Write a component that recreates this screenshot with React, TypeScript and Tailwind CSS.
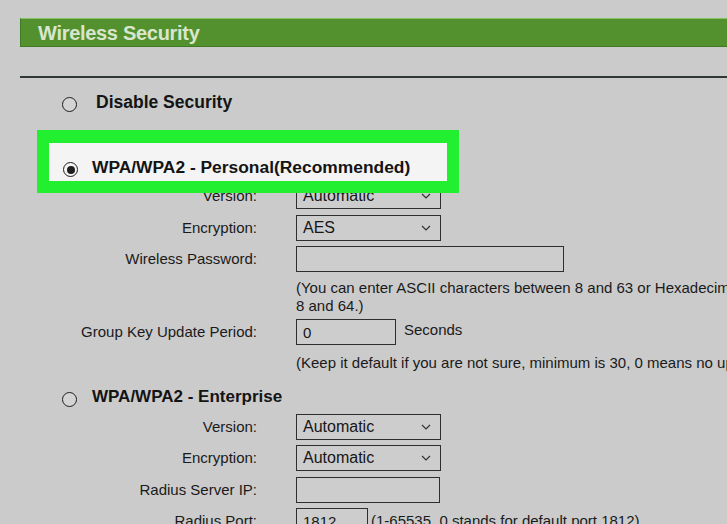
import React from 'react';

const font = { fontFamily: '"Liberation Sans", Arial, sans-serif' };

function Radio({ checked = false }: { checked?: boolean }) {
    return (
        <span className={`flex h-[15px] w-[15px] shrink-0 items-center justify-center rounded-full border-[1.5px] border-[#1e1e1e] ${checked ? 'bg-[#f4f4f4]' : 'bg-[#d4d4d4]'}`}>
            {checked && <span className="h-[8px] w-[8px] rounded-full bg-[#1e1e1e]" />}
        </span>
    );
}

function Select({ value }: { value: string }) {
    return (
        <div className="flex h-[26px] w-[145px] items-center justify-between border border-[#2e2e2e] bg-[#cdcdcd] pl-[6px] pr-[9px] text-[16px] text-[#161616]">
            <span>{value}</span>
            <svg width="10" height="6" viewBox="0 0 10 6" fill="none">
                <polyline points="1,1 5,5 9,1" stroke="#333" strokeWidth="1.2" />
            </svg>
        </div>
    );
}

function Field({ width, value = '' }: { width: string; value?: string }) {
    return (
        <div className={`flex h-[26px] items-center border border-[#2e2e2e] bg-[#cdcdcd] pl-[6px] pt-[3px] text-[15px] text-[#161616] ${width}`}>
            {value}
        </div>
    );
}

function Row({ label, className = '', children }: { label: string; className?: string; children: React.ReactNode }) {
    return (
        <div className={`flex h-[26px] items-center ${className}`}>
            <div className="w-[257px] shrink-0 text-right text-[15px] text-[#1a1a1a]">{label}</div>
            <div className="ml-[39px] flex items-center">{children}</div>
        </div>
    );
}

export default function App() {
    return (
        <div className="h-[524px] w-[727px] overflow-hidden bg-[#cbcbcb] pt-[18px]" style={font}>
            {/* Header */}
            <div className="ml-[20px] flex h-[29px] items-center border-y border-l border-t-[#86c463] border-b-[#3f7a25] border-l-[#3f7a25] bg-[#53912f] pl-[17px]">
                <span className="text-[20px] font-bold tracking-[-0.3px] text-[#d9e6cd]">Wireless Security</span>
            </div>

            <div className="ml-[20px] mt-[29px] h-[2px] bg-[#2f3833]" />

            {/* Disable */}
            <div className="ml-[62px] mt-[14px] flex h-[20px] items-center">
                <span className="mt-[4px]"><Radio /></span>
                <span className="ml-[19px] text-[17.5px] font-bold text-[#141414]">Disable Security</span>
            </div>

            {/* Personal (highlighted) */}
            <div className="relative z-10 ml-[37px] mt-[18px] w-[422px] bg-[#22ef30] px-[12px] pb-[12px] pt-[13px]">
                <div className="flex h-[38px] items-start bg-[#f4f4f4] pl-[14px] pt-[14px]">
                    <span className="mt-[5px]"><Radio checked /></span>
                    <span className="ml-[14px] text-[17.4px] font-bold leading-[20px] text-[#141414]">WPA/WPA2 - Personal(Recommended)</span>
                </div>
            </div>

            <Row label="Version:" className="-mt-[10px]">
                <Select value="Automatic" />
            </Row>
            <Row label="Encryption:" className="mt-[6px]">
                <Select value="AES" />
            </Row>
            <Row label="Wireless Password:" className="mt-[5px]">
                <Field width="w-[268px]" />
            </Row>
            <div className="ml-[296px] mt-[7px] whitespace-nowrap text-[15px] leading-[18px] text-[#1a1a1a]">
                <div>(You can enter ASCII characters between 8 and 63 or Hexadecimal characters between</div>
                <div>8 and 64.)</div>
            </div>
            <Row label="Group Key Update Period:" className="mt-[4px]">
                <Field width="w-[100px]" value="0" />
                <span className="ml-[8px] -mt-[3px] text-[15px] text-[#1a1a1a]">Seconds</span>
            </Row>
            <div className="ml-[296px] mt-[9px] whitespace-nowrap text-[15px] leading-[18px] text-[#1a1a1a]">
                (Keep it default if you are not sure, minimum is 30, 0 means no update)
            </div>

            {/* Enterprise */}
            <div className="ml-[62px] mt-[15px] flex h-[20px] items-center">
                <span className="mt-[5px]"><Radio /></span>
                <span className="ml-[15px] text-[17px] font-bold text-[#141414]">WPA/WPA2 - Enterprise</span>
            </div>
            <Row label="Version:" className="mt-[7px]">
                <Select value="Automatic" />
            </Row>
            <Row label="Encryption:" className="mt-[5px]">
                <Select value="Automatic" />
            </Row>
            <Row label="Radius Server IP:" className="mt-[6px]">
                <Field width="w-[144px]" />
            </Row>
            <Row label="Radius Port:" className="mt-[5px]">
                <Field width="w-[72px]" value="1812" />
                <span className="ml-[3px] whitespace-nowrap text-[15px] text-[#1a1a1a]">(1-65535, 0 stands for default port 1812)</span>
            </Row>
        </div>
    );
}
